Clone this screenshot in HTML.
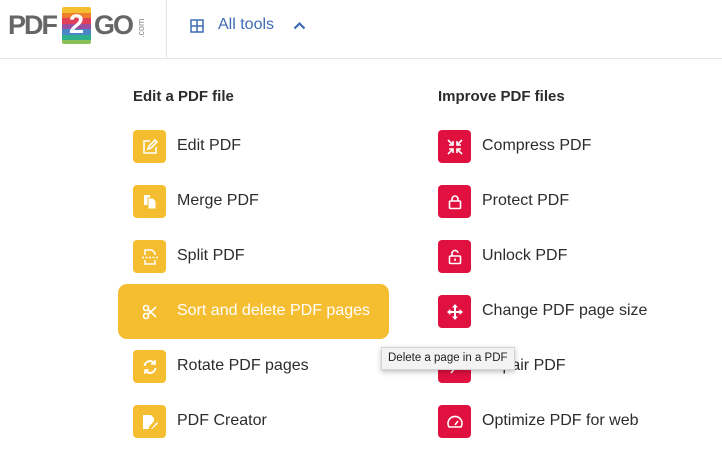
<!DOCTYPE html>
<html><head><style>
*{margin:0;padding:0;box-sizing:border-box}
body{width:722px;height:454px;background:#fff;font-family:"Liberation Sans",sans-serif;color:#2c2c2c;position:relative;overflow:hidden}
.hdr{position:absolute;left:0;top:0;width:722px;height:59px;border-bottom:1px solid #e4e4e8}
.logoBox{position:absolute;left:0;top:0;width:167px;height:59px;border-right:1px solid #e4e4e8}
.abs{position:absolute}
.h{position:absolute;font-size:15px;font-weight:bold;color:#2c2c2c}
.ic{position:absolute;width:33px;height:33px;border-radius:4px;display:flex;align-items:center;justify-content:center}
.y{background:#f5bd30}.r{background:#e0103f}
.t{position:absolute;font-size:16px;color:#2c2c2c;line-height:20px}
</style></head><body>
<div class="hdr"></div>
<div class="logoBox">
<div class="abs" style="left:8px;top:10px;font-size:27px;font-weight:bold;color:#666;letter-spacing:-2px">PDF</div>
<div class="abs" style="left:62px;top:7px;width:29px;height:37px;overflow:hidden;border-radius:2px">
 <div style="height:6px;background:#f5bd30"></div><div style="height:5px;background:#ef7e2d"></div><div style="height:6px;background:#e0405a"></div><div style="height:5px;background:#9b4fa0"></div><div style="height:6px;background:#4a86c6"></div><div style="height:5px;background:#2fb08a"></div><div style="height:4px;background:#8ac05a"></div>
 <div class="abs" style="left:0;top:2px;width:29px;text-align:center;font-size:27px;font-weight:bold;color:#fff">2</div>
</div>
<div class="abs" style="left:94px;top:10px;font-size:27px;font-weight:bold;color:#666;letter-spacing:-2px">GO</div>
<div class="abs" style="left:136px;top:38px;font-size:9px;color:#888;transform:rotate(-90deg);transform-origin:left top">.com</div>
</div>
<svg class="abs" style="left:190px;top:19px" width="14" height="14" viewBox="0 0 14 14"><rect x="1" y="1" width="12" height="12" fill="none" stroke="#3d6bb3" stroke-width="1.5"/><path d="M7 1V13M1 7H13" stroke="#3d6bb3" stroke-width="1.5"/></svg>
<div class="abs" style="left:218px;top:16px;font-size:16px;color:#3d6bb3">All tools</div>
<svg class="abs" style="left:293px;top:21px" width="13" height="9" viewBox="0 0 13 9"><path d="M1.5 7.5L6.5 2.5L11.5 7.5" fill="none" stroke="#3d6bb3" stroke-width="2.2"/></svg>

<div class="h" style="left:133px;top:88px">Edit a PDF file</div>
<div class="h" style="left:438px;top:88px">Improve PDF files</div>

<div class="abs" style="left:118px;top:284px;width:271px;height:55px;background:#f5bd30;border-radius:9px"></div>

<div class="ic y" style="left:133px;top:130px"><svg width="16" height="16" viewBox="0 0 16 16" fill="none" stroke="#fff" stroke-width="1.6"><path d="M8 2H2V14H14V8"/><path d="M6 10L7 7L13 1L15 3L9 9Z"/></svg></div>
<div class="t" style="left:177px;top:136px">Edit PDF</div>
<div class="ic y" style="left:133px;top:185px"><svg width="14" height="16" viewBox="0 0 14 16" fill="#fff"><path d="M1 1H7V11H1Z"/><path d="M5 4H10L13 7V15H5Z" stroke="#f5bd30" stroke-width="1"/></svg></div>
<div class="t" style="left:177px;top:191px">Merge PDF</div>
<div class="ic y" style="left:133px;top:240px"><svg width="16" height="16" viewBox="0 0 16 16" fill="none" stroke="#fff" stroke-width="1.5"><path d="M3 6V1H10L13 4V6"/><path d="M3 11V15H13V11"/><path d="M0 8.5H16" stroke-dasharray="2 1.5"/></svg></div>
<div class="t" style="left:177px;top:246px">Split PDF</div>
<div class="ic" style="left:133px;top:295px"><svg width="16" height="16" viewBox="0 0 16 16" fill="none" stroke="#fff" stroke-width="1.6"><circle cx="4" cy="4" r="2.5"/><circle cx="4" cy="12" r="2.5"/><path d="M6 5.5L14 13M6 10.5L14 3"/></svg></div>
<div class="t" style="left:177px;top:301px;color:#fff">Sort and delete PDF pages</div>
<div class="ic y" style="left:133px;top:350px"><svg width="16" height="16" viewBox="0 0 16 16" fill="none" stroke="#fff" stroke-width="2"><path d="M2.5 7A5.5 5.5 0 0 1 12.5 4.5M13.5 9A5.5 5.5 0 0 1 3.5 11.5"/><path d="M13 1V5H9M3 15V11H7" stroke-width="1.6"/></svg></div>
<div class="t" style="left:177px;top:356px">Rotate PDF pages</div>
<div class="ic y" style="left:133px;top:405px"><svg width="16" height="16" viewBox="0 0 16 16" fill="#fff"><path d="M1 1H9L12 4V7L7 13V15H1Z"/><path d="M9 15L15 8L16 9.5L10 15Z"/></svg></div>
<div class="t" style="left:177px;top:411px">PDF Creator</div>

<div class="ic r" style="left:438px;top:130px"><svg width="16" height="16" viewBox="0 0 16 16" fill="none" stroke="#fff" stroke-width="1.6"><path d="M1 1L6 6M6 2V6H2M15 1L10 6M10 2V6H14M1 15L6 10M6 14V10H2M15 15L10 10M10 14V10H14"/></svg></div>
<div class="t" style="left:482px;top:136px">Compress PDF</div>
<div class="ic r" style="left:438px;top:185px"><svg width="16" height="16" viewBox="0 0 16 16" fill="none" stroke="#fff" stroke-width="1.6"><rect x="2.5" y="7" width="11" height="7.5" rx="1"/><path d="M5 7V5A3 3 0 0 1 11 5V7"/></svg></div>
<div class="t" style="left:482px;top:191px">Protect PDF</div>
<div class="ic r" style="left:438px;top:240px"><svg width="16" height="16" viewBox="0 0 16 16" fill="none" stroke="#fff" stroke-width="1.6"><rect x="2.5" y="7" width="11" height="7.5" rx="1"/><path d="M5 7V5A3 3 0 0 1 11 4"/><path d="M8 9.5V12"/></svg></div>
<div class="t" style="left:482px;top:246px">Unlock PDF</div>
<div class="ic r" style="left:438px;top:295px"><svg width="16" height="16" viewBox="0 0 16 16" fill="#fff"><path d="M8 0L11 3.5H9V7H12.5V5L16 8L12.5 11V9H9V12.5H11L8 16L5 12.5H7V9H3.5V11L0 8L3.5 5V7H7V3.5H5Z"/></svg></div>
<div class="t" style="left:482px;top:301px">Change PDF page size</div>
<div class="ic r" style="left:438px;top:350px"><svg width="16" height="16" viewBox="0 0 16 16" fill="none" stroke="#fff" stroke-width="1.6"><path d="M4 14L12 4"/></svg></div>
<div class="t" style="left:482px;top:356px">Repair PDF</div>
<div class="ic r" style="left:438px;top:405px"><svg width="16" height="14" viewBox="0 0 16 14" fill="none" stroke="#fff" stroke-width="1.6"><path d="M2 12A7 7 0 1 1 14 12Z"/><path d="M8 10L11 6" /></svg></div>
<div class="t" style="left:482px;top:411px">Optimize PDF for web</div>

<div class="abs" style="left:381px;top:347px;width:134px;height:23px;background:#f3f3f3;border:1px solid #d4d4d4;box-shadow:0 2px 5px rgba(0,0,0,.25);font-size:11.5px;color:#222;padding:4px 0 0 6px;white-space:nowrap">Delete a page in a PDF</div>
</body></html>
